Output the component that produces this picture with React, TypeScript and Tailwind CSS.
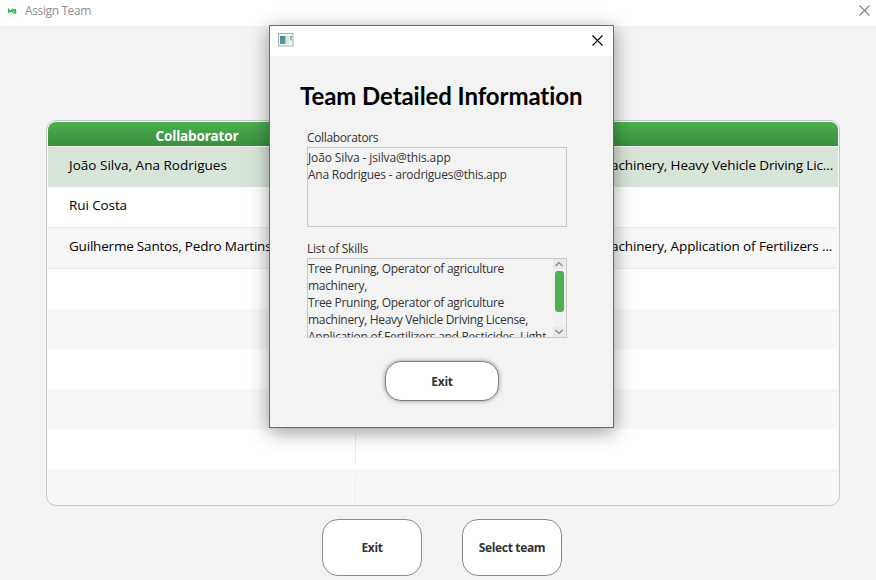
import React from "react";

const rows = [
  { name: "João Silva, Ana Rodrigues", nameCls: "tracking-[0.02px]", skills: "achinery, Heavy Vehicle Driving Lic...", cls: "h-[40px] bg-[#d7e5d8]" },
  { name: "Rui Costa", nameCls: "tracking-[-0.1px]", skills: "", cls: "h-[41px] bg-white border-b border-[#ededed]" },
  { name: "Guilherme Santos, Pedro Martins", nameCls: "tracking-[-0.2px]", skills: "achinery, Application of Fertilizers ...", cls: "h-[41px] bg-[#f7f7f7] border-b border-[#ededed]" },
];

const emptyRows = ["bg-white", "bg-[#f7f7f7]", "bg-white", "bg-[#f7f7f7]", "bg-white", "bg-[#f7f7f7]"];

function Cross({ className }: { className: string }) {
  return (
    <svg className={className} width="11" height="11" viewBox="0 0 11 11" fill="none" stroke="currentColor">
      <path d="M0.5 0.5L10.5 10.5M10.5 0.5L0.5 10.5" strokeWidth="1.1" />
    </svg>
  );
}

function AppLogo() {
  return (
    <svg className="ml-[5px] mt-[-4px] shrink-0" width="15" height="16" viewBox="0 0 15 16">
      <rect width="15" height="16" fill="#fcfdfc" />
      <path d="M3.6 10.2V6.6L5.4 8.6L7.2 6.6V10.2M11 6.6H8.9V8.2H10.6V9.8H8.3" fill="none" stroke="#1fb141" strokeWidth="1.2" />
    </svg>
  );
}

function WindowIcon() {
  return (
    <svg className="ml-2 mt-[-2px] shrink-0" width="16" height="14" viewBox="0 0 16 14">
      <defs>
        <linearGradient id="pane" x1="0" y1="0" x2="0.4" y2="1">
          <stop offset="0" stopColor="#4b7fae" />
          <stop offset="1" stopColor="#48a878" />
        </linearGradient>
      </defs>
      <rect x="0.5" y="0.5" width="14.5" height="12.5" fill="#f4f5f5" stroke="#a9b1b8" />
      <rect x="2" y="3" width="5.5" height="8" fill="url(#pane)" />
      <rect x="8" y="3" width="3" height="8" fill="#dfe1e2" />
      <rect x="12" y="3" width="2" height="2.5" fill="#7faed0" />
      <rect x="12" y="5.5" width="2" height="2" fill="#8fcfa5" />
    </svg>
  );
}

function TeamTable() {
  return (
    <div className="ml-[46px] mt-[94px] h-[386px] w-[794px] rounded-[10px] border border-[#c8c8c8] bg-[#f7f7f7] p-px">
      <div className="flex h-full flex-col overflow-hidden rounded-[8px]">
        <div className="flex h-[24px] shrink-0 items-center bg-linear-to-b from-[#4caf50] to-[#388e3c]">
          <div className="w-[298px] pt-[3px] text-center text-[13.5px] font-bold leading-[20px] tracking-[-0.17px] text-white">Collaborator</div>
        </div>
        <div className="h-px shrink-0 bg-white" />
        {rows.map((row) => (
          <div key={row.name} className={`flex shrink-0 text-[13.5px] leading-[37px] text-black ${row.cls}`}>
            <div className={`w-[308px] whitespace-nowrap pl-[21px] ${row.nameCls}`}>{row.name}</div>
            <div className="ml-[255px] whitespace-nowrap tracking-[-0.12px]">{row.skills}</div>
          </div>
        ))}
        {emptyRows.map((color, i) => (
          <div key={i} className={`flex h-[40px] shrink-0 ${color}`}>
            <div className="mt-[5px] h-[30px] w-[308px] border-r border-[#ececec]" />
          </div>
        ))}
      </div>
    </div>
  );
}

function TeamDialog() {
  return (
    <div className="absolute left-[269px] top-[25px] flex h-[403px] w-[345px] flex-col border border-[#6b6b6b] bg-[#f3f3f3] shadow-[0_4px_18px_rgba(0,0,0,0.4)]">
      <div className="flex h-[30px] shrink-0 items-center bg-white">
        <WindowIcon />
        <Cross className="ml-auto mr-[10px] mt-[-2px] text-black" />
      </div>
      <h1 className="ml-[30px] mt-[24px] h-[32px] whitespace-nowrap font-['Lato'] text-[24px] font-bold leading-[32px] tracking-[-0.08px] text-black">Team Detailed Information</h1>
      <div className="ml-[37px] w-[260px] text-[12px] leading-[17px] text-[#333333]">
        <div className="mt-[17px] h-[18px] tracking-[-0.35px]">Collaborators</div>
        <div className="h-[80px] whitespace-nowrap border border-[#c8c8c8] pt-px">
          <div className="tracking-[-0.12px]">João Silva - jsilva@this.app</div>
          <div className="tracking-[-0.24px]">Ana Rodrigues - arodrigues@this.app</div>
        </div>
        <div className="mt-[13px] h-[18px] tracking-[-0.25px]">List of Skills</div>
        <div className="flex h-[80px] overflow-hidden border border-[#c8c8c8]">
          <div className="w-[245px] shrink-0 whitespace-nowrap pt-px tracking-[-0.31px]">
            <div>Tree Pruning, Operator of agriculture</div>
            <div>machinery,</div>
            <div>Tree Pruning, Operator of agriculture</div>
            <div>machinery, Heavy Vehicle Driving License,</div>
            <div className="tracking-[-0.27px]">Application of Fertilizers and Pesticides, Light</div>
          </div>
          <div className="flex w-[12px] flex-col items-center justify-between bg-[#f0f0f0] text-[#8a8a8a]">
            <svg width="12" height="10" viewBox="0 0 12 10" fill="none" stroke="currentColor">
              <rect width="12" height="10" fill="#e9e9e9" stroke="none" />
              <path d="M2.5 7L6 3.5L9.5 7" strokeWidth="1.2" />
            </svg>
            <div className="mb-auto mt-[2px] h-[41px] w-[9px] rounded-[3px] bg-[#4caf50]" />
            <svg width="12" height="10" viewBox="0 0 12 10" fill="none" stroke="currentColor">
              <rect width="12" height="10" fill="#e9e9e9" stroke="none" />
              <path d="M2.5 3L6 6.5L9.5 3" strokeWidth="1.2" />
            </svg>
          </div>
        </div>
      </div>
      <button className="ml-[115px] mt-[23px] h-[40px] w-[114px] rounded-[16px] border border-[#808080] bg-white pt-[2px] text-[12px] font-bold tracking-[-0.3px] text-[#333333] shadow-[0_0_4px_rgba(0,0,0,0.4)]">Exit</button>
    </div>
  );
}

export default function App() {
  return (
    <div className="relative h-[580px] w-[876px] overflow-hidden bg-[#f3f3f3] font-['Open_Sans',sans-serif]">
      <div className="flex h-[26px] items-center bg-white">
        <AppLogo />
        <div className="ml-[5px] mt-[-4px] text-[12px] leading-[16px] tracking-[-0.38px] text-[#8f8f8f]">Assign Team</div>
        <Cross className="ml-auto mr-[6px] mt-[-6px] text-[#808080]" />
      </div>
      <TeamTable />
      <div className="ml-[322px] mt-[13px] flex gap-[40px] text-[12px] font-bold tracking-[-0.35px] text-[#333333]">
        <button className="h-[57px] w-[100px] rounded-[16px] border border-[#8a8a8a] bg-white">Exit</button>
        <button className="h-[57px] w-[100px] rounded-[16px] border border-[#8a8a8a] bg-white">Select team</button>
      </div>
      <TeamDialog />
    </div>
  );
}
